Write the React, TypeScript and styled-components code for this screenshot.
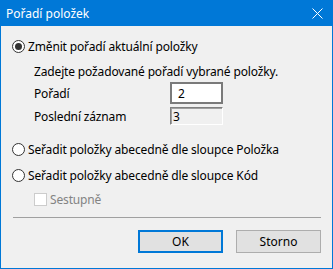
import React from 'react'
import styled, { createGlobalStyle } from 'styled-components'

const GlobalStyle = createGlobalStyle`
  html, body {
    margin: 0;
    padding: 0;
    background: #f0f0f0;
  }
  body {
    font-family: "Noto Sans", "Open Sans", sans-serif;
    font-size: 12px;
    color: #000;
  }
`

const Window = styled.div`
  width: 333px;
  height: 269px;
  box-sizing: border-box;
  border: 1px solid #0078d7;
  border-top: none;
  background: #f0f0f0;
  display: flex;
  flex-direction: column;
`

const TitleBar = styled.div`
  height: 26px;
  margin: 0 -1px;
  background: #0078d7;
  color: #fff;
  display: flex;
  align-items: center;
  justify-content: space-between;
  padding: 0 10px 0 6px;
  font-size: 12px;
`

const CloseIcon = () => (
  <svg width="11" height="11" viewBox="0 0 11 11">
    <path d="M0.5 0.5 L10.5 10.5 M10.5 0.5 L0.5 10.5" stroke="#fff" strokeWidth="1" />
  </svg>
)

const Body = styled.div`
  display: flex;
  flex-direction: column;
  padding: 12px 11px 0 11px;
`

const Row = styled.div<{ indent?: number; gap?: number; h?: number }>`
  display: flex;
  align-items: center;
  height: ${({ h }) => h ?? 16}px;
  margin-top: ${({ gap }) => gap ?? 0}px;
  padding-left: ${({ indent }) => indent ?? 0}px;
  white-space: nowrap;
`

const RadioCircle = styled.span<{ checked?: boolean }>`
  width: 13px;
  height: 13px;
  box-sizing: border-box;
  border: 1px solid #333;
  border-radius: 50%;
  background: #fff;
  margin-right: 3px;
  display: flex;
  align-items: center;
  justify-content: center;
  flex-shrink: 0;
  &::after {
    content: '';
    width: 7px;
    height: 7px;
    border-radius: 50%;
    background: #333;
    display: ${({ checked }) => (checked ? 'block' : 'none')};
  }
`

const Label = styled.span<{ width?: number; disabled?: boolean }>`
  width: ${({ width }) => (width ? `${width}px` : 'auto')};
  color: ${({ disabled }) => (disabled ? '#838383' : '#000')};
  letter-spacing: -0.15px;
`

const Input = styled.div<{ disabled?: boolean; h: number }>`
  width: 53px;
  height: ${({ h }) => h}px;
  box-sizing: border-box;
  border: 1px solid #7a7a7a;
  ${({ disabled }) =>
    disabled
      ? `border: 1px solid #fff; border-top-color: #808080; border-left-color: #808080; box-shadow: inset 1px 1px 0 #a0a0a0; background: #f0f0f0; padding-left: 2px;`
      : `background: #fff; padding-left: 6px; border-width: 2px; border-color: #7a7a7a;`}
  display: flex;
  align-items: center;
`

const CheckBox = styled.span`
  width: 13px;
  height: 13px;
  box-sizing: border-box;
  border: 1px solid #cccccc;
  background: #fff;
  margin-right: 3px;
`

const Separator = styled.div`
  height: 1px;
  background: #a0a0a0;
  margin: 10px 0 0 1px;
`

const Buttons = styled.div`
  display: flex;
  justify-content: flex-end;
  gap: 13px;
  margin-top: 12px;
`

const Button = styled.div<{ primary?: boolean }>`
  width: 85px;
  height: 23px;
  box-sizing: border-box;
  background: #e1e1e1;
  border: ${({ primary }) => (primary ? '2px solid #0078d7' : '1px solid #adadad')};
  display: flex;
  align-items: center;
  justify-content: center;
`

export default function App() {
  return (
    <>
      <GlobalStyle />
      <Window>
        <TitleBar>
          <span>Pořadí položek</span>
          <CloseIcon />
        </TitleBar>
        <Body>
          <Row h={16}>
            <RadioCircle checked />
            <Label>Změnit pořadí aktuální položky</Label>
          </Row>
          <Row indent={22} gap={9}>
            <Label>Zadejte požadované pořadí vybrané položky.</Label>
          </Row>
          <Row indent={22} gap={3} h={22}>
            <Label width={136}>Pořadí</Label>
            <Input h={22}>2</Input>
          </Row>
          <Row indent={22} gap={3} h={18}>
            <Label width={136}>Poslední záznam</Label>
            <Input h={18} disabled>3</Input>
          </Row>
          <Row gap={16}>
            <RadioCircle />
            <Label>Seřadit položky abecedně dle sloupce Položka</Label>
          </Row>
          <Row gap={10}>
            <RadioCircle />
            <Label>Seřadit položky abecedně dle sloupce Kód</Label>
          </Row>
          <Row indent={22} gap={8}>
            <CheckBox />
            <Label disabled>Sestupně</Label>
          </Row>
          <Separator />
          <Buttons>
            <Button primary>OK</Button>
            <Button>Storno</Button>
          </Buttons>
        </Body>
      </Window>
    </>
  )
}
